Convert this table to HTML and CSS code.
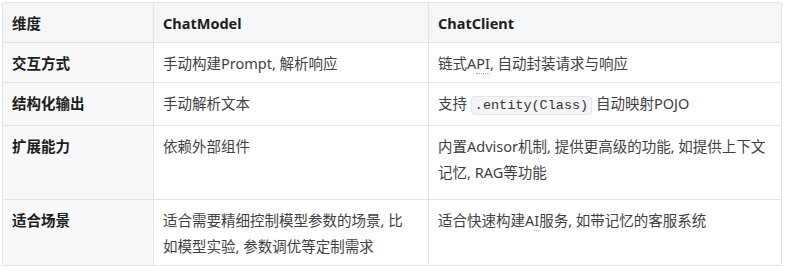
FILE: index.html
```html
<!DOCTYPE html>
<html lang="zh">
<head>
<meta charset="utf-8">
<link rel="stylesheet" href="styles.css">
</head>
<body>
<div class="wrap">
<table class="cmp">
  <colgroup>
    <col class="c1"><col class="c2"><col class="c3">
  </colgroup>
  <thead>
    <tr>
      <th>维度</th>
      <th>ChatModel</th>
      <th>ChatClient</th>
    </tr>
  </thead>
  <tbody>
    <tr>
      <th>交互方式</th>
      <td>手动构建Prompt, 解析响应</td>
      <td>链式A<span class="dot">PI</span>, 自动封装请求与响应</td>
    </tr>
    <tr>
      <th>结构化输出</th>
      <td>手动解析文本</td>
      <td>支持 <code>.entity(Class)</code> 自动映射POJO</td>
    </tr>
    <tr class="r-tall">
      <th>扩展能力</th>
      <td>依赖外部组件</td>
      <td>内置Advisor机制, 提供更高级的功能, 如提供上下文记忆, RAG等功能</td>
    </tr>
    <tr class="r-last">
      <th>适合场景</th>
      <td class="narrow">适合需要精细控制模型参数的场景, 比如模型实验, 参数调优等定制需求</td>
      <td>适合快速构建A<span class="dot">I</span>服务, 如带记忆的客服系统</td>
    </tr>
  </tbody>
</table>
</div>
</body>
</html>
```

FILE: styles.css
```css
html, body {
  margin: 0;
  padding: 0;
  background: #ffffff;
}

.wrap {
  padding: 2px 5px 0 2px;
}

.cmp {
  width: 779px;
  border-collapse: collapse;
  table-layout: fixed;
  font-family: "Noto Sans", "Noto Sans CJK SC", sans-serif;
  font-size: 14.5px;
  line-height: 26px;
  color: #3f3f3f;
  border: 1px solid #e3e5e8;
}

.c1 { width: 151px; }
.c2 { width: 275px; }
.c3 { width: 353px; }

.cmp th,
.cmp td {
  border: 1px solid #e3e5e8;
  padding: 7px 9px 6px 9px;
  text-align: left;
  vertical-align: top;
  word-break: break-all;
}

.cmp td.narrow {
  padding-right: 16px;
}

.cmp th {
  font-weight: 700;
  color: #1c1c1c;
}

.cmp thead th {
  background: #f5f6f8;
}

.cmp tbody th {
  background: #f7f8fa;
}

.cmp td {
  background: #ffffff;
  font-weight: 400;
}

.r-tall {
  height: 74px;
}

.r-last {
  height: 64px;
}

code {
  font-family: "Liberation Mono", "DejaVu Sans Mono", monospace;
  font-size: 13.5px;
  background: #f4f5f6;
  border: 1px solid #e4e6e8;
  border-radius: 4px;
  padding: 1px 3px;
  color: #333;
}

.dot {
  border-bottom: 1px dotted #b0b0b0;
}
```
